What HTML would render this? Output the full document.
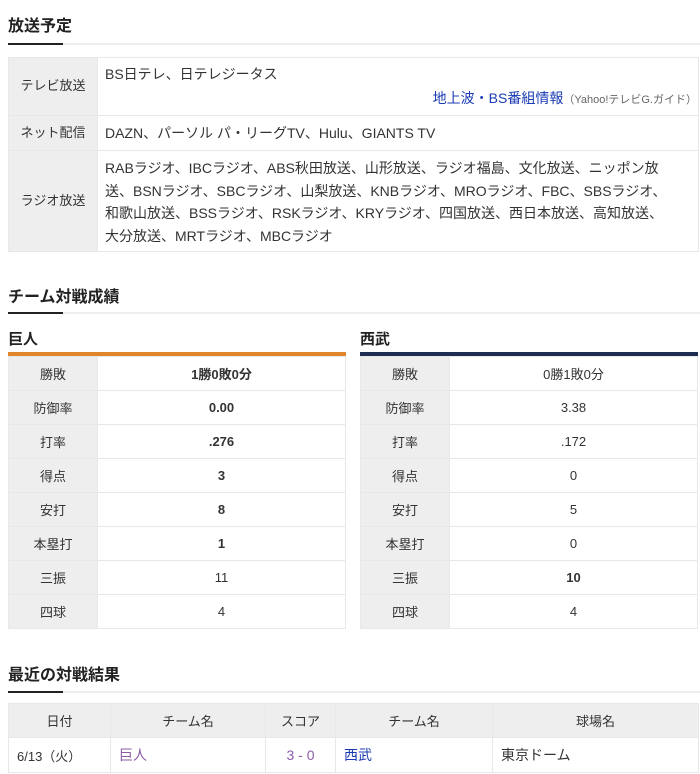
<!DOCTYPE html>
<html><head><meta charset="utf-8"><style>
*{margin:0;padding:0;box-sizing:border-box}
body{width:700px;height:774px;background:#fff;font-family:"Liberation Sans","Noto Sans CJK JP",sans-serif;color:#333;position:relative;overflow:hidden}
.h{position:absolute;left:8px;font-size:16px;font-weight:bold;color:#222}
.ul{position:absolute;left:8px;right:0;height:2px;background:#eee}
.ul:before{content:"";position:absolute;left:0;top:0;width:55px;height:2px;background:#222}
table{border-collapse:collapse;position:absolute;font-size:13px}
td,th{border:1px solid #e8e8e8}
.lab{background:#eee;text-align:center;font-weight:normal;color:#333}
.bc{left:8px;top:57px;width:691px}
.bc td{padding:0 7px;font-size:14px;line-height:22.5px;vertical-align:top}
.bc td.lab{width:89px;vertical-align:middle;font-size:13px;padding:0}
.st{top:356px;width:338px}
.st td{height:34px;text-align:center}
.st td.lab{width:89px;font-weight:normal}
.bar{position:absolute;top:352px;height:4px;width:338px}
a{color:#1a3bb3;text-decoration:none}
.rs{left:8px;top:703px;width:691px}
.rs th{background:#eee;font-weight:normal;height:34px;font-size:13px}
.rs td{height:35px;font-size:14px;padding-left:8px}
</style></head><body>
<div class="h" style="top:12px">放送予定</div>
<div class="ul" style="top:43px"></div>
<table class="bc">
<tr><td class="lab" style="height:58px">テレビ放送</td><td style="padding-top:5px">BS日テレ、日テレジータス<div style="text-align:right;line-height:22px;margin-right:-6px;margin-top:1px"><a>地上波・BS番組情報</a><span style="font-size:11px;color:#666">（Yahoo!テレビG.ガイド）</span></div></td></tr>
<tr><td class="lab" style="height:35px">ネット配信</td><td style="vertical-align:middle">DAZN、パーソル パ・リーグTV、Hulu、GIANTS TV</td></tr>
<tr><td class="lab" style="height:101px">ラジオ放送</td><td style="padding-top:6px;white-space:nowrap">RABラジオ、IBCラジオ、ABS秋田放送、山形放送、ラジオ福島、文化放送、ニッポン放<br>送、BSNラジオ、SBCラジオ、山梨放送、KNBラジオ、MROラジオ、FBC、SBSラジオ、<br>和歌山放送、BSSラジオ、RSKラジオ、KRYラジオ、四国放送、西日本放送、高知放送、<br>大分放送、MRTラジオ、MBCラジオ</td></tr>
</table>
<div class="h" style="top:283px">チーム対戦成績</div>
<div class="ul" style="top:312px"></div>
<div class="h" style="top:328px;font-size:15px">巨人</div>
<div class="h" style="top:328px;left:360px;font-size:15px">西武</div>
<div class="bar" style="left:8px;background:#e0852c"></div>
<div class="bar" style="left:360px;background:#1f2d52"></div>
<table class="st" style="left:8px;font-weight:bold">
<tr><td class="lab">勝敗</td><td>1勝0敗0分</td></tr>
<tr><td class="lab">防御率</td><td>0.00</td></tr>
<tr><td class="lab">打率</td><td>.276</td></tr>
<tr><td class="lab">得点</td><td>3</td></tr>
<tr><td class="lab">安打</td><td>8</td></tr>
<tr><td class="lab">本塁打</td><td>1</td></tr>
<tr><td class="lab">三振</td><td style="font-weight:normal">11</td></tr>
<tr><td class="lab">四球</td><td style="font-weight:normal">4</td></tr>
</table>
<table class="st" style="left:360px">
<tr><td class="lab">勝敗</td><td>0勝1敗0分</td></tr>
<tr><td class="lab">防御率</td><td>3.38</td></tr>
<tr><td class="lab">打率</td><td>.172</td></tr>
<tr><td class="lab">得点</td><td>0</td></tr>
<tr><td class="lab">安打</td><td>5</td></tr>
<tr><td class="lab">本塁打</td><td>0</td></tr>
<tr><td class="lab">三振</td><td style="font-weight:bold">10</td></tr>
<tr><td class="lab">四球</td><td>4</td></tr>
</table>
<div class="h" style="top:661px">最近の対戦結果</div>
<div class="ul" style="top:691px"></div>
<table class="rs">
<tr><th style="width:102px">日付</th><th style="width:155px">チーム名</th><th style="width:70px">スコア</th><th style="width:157px">チーム名</th><th>球場名</th></tr>
<tr><td style="font-size:13px">6/13（火）</td><td><a style="color:#8a5ca8">巨人</a></td><td style="text-align:center;padding:0"><a style="color:#8a5ca8">3 - 0</a></td><td><a>西武</a></td><td>東京ドーム</td></tr>
</table>
</body></html>
